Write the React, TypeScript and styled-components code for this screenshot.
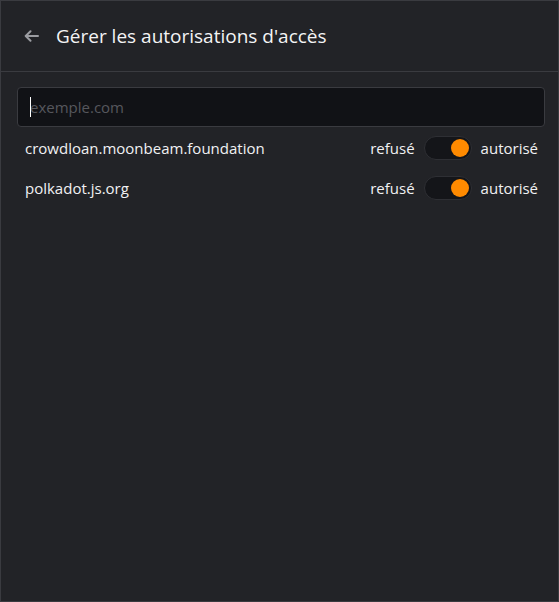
import React, { FC } from 'react';
import styled, { createGlobalStyle } from 'styled-components';

const GlobalStyle = createGlobalStyle`
  html, body {
    margin: 0;
    padding: 0;
    background: #222327;
  }
  body {
    font-family: 'Open Sans', 'Noto Sans', sans-serif;
    color: #ffffff;
  }
`;

const sites = ['crowdloan.moonbeam.foundation', 'polkadot.js.org'];

const SiteRow: FC<{ url: string }> = ({ url }) => (
  <Row>
    <Url>{url}</Url>
    <Controls>
      <Label>refusé</Label>
      <Toggle $on>
        <Knob />
      </Toggle>
      <Label>autorisé</Label>
    </Controls>
  </Row>
);

export default function App() {
  return (
    <>
      <GlobalStyle />
      <Frame>
        <Header>
          <BackButton aria-label="retour">
            <svg width="15" height="12" viewBox="0 0 15 12" fill="none">
              <path d="M14 6H2M6.5 1.2L1.7 6l4.8 4.8" stroke="#9b9ca1" strokeWidth="2" strokeLinecap="round" strokeLinejoin="round" />
            </svg>
          </BackButton>
          <Title>Gérer les autorisations d'accès</Title>
        </Header>
        <Body>
          <SearchBox>
            <Caret />
            <Search placeholder="exemple.com" />
          </SearchBox>
          <List>
            {sites.map(url => (
              <SiteRow key={url} url={url} />
            ))}
          </List>
        </Body>
      </Frame>
    </>
  );
}

const Frame = styled.div`
  box-sizing: border-box;
  width: 559px;
  height: 602px;
  border: 1px solid #3a3b40;
  background: #222327;
  display: flex;
  flex-direction: column;
`;

const Header = styled.div`
  height: 70px;
  display: flex;
  align-items: center;
  gap: 15px;
  padding: 0 0 0 23px;
  border-bottom: 1px solid #3a3b40;
  box-sizing: content-box;
`;

const BackButton = styled.button`
  background: none;
  border: 0;
  padding: 0;
  width: 17px;
  height: 14px;
  display: flex;
  align-items: center;
  cursor: pointer;
`;

const Title = styled.h1`
  margin: 0;
  font-size: 19px;
  font-weight: 500;
  color: #f4f4f5;
`;

const Body = styled.div`
  padding: 15px 13px 0 16px;
  display: flex;
  flex-direction: column;
`;

const SearchBox = styled.div`
  position: relative;
`;

const Caret = styled.span`
  position: absolute;
  left: 13px;
  top: 10px;
  width: 1px;
  height: 20px;
  background: #ffffff;
  pointer-events: none;
`;

const Search = styled.input`
  box-sizing: border-box;
  width: 100%;
  height: 40px;
  background: #111216;
  border: 1px solid #3a3b40;
  border-radius: 4px;
  padding: 0 12px;
  font-family: inherit;
  font-size: 15px;
  color: #ffffff;
  outline: none;

  &::placeholder {
    color: #56575d;
  }
`;

const List = styled.div`
  display: flex;
  flex-direction: column;
  padding: 1px 7px 0 8px;
`;

const Row = styled.div`
  height: 40px;
  display: flex;
  align-items: center;
  justify-content: space-between;
`;

const Url = styled.span`
  font-size: 15px;
  color: #f1f1f3;
`;

const Controls = styled.div`
  display: flex;
  align-items: center;
  gap: 9px;
`;

const Label = styled.span`
  font-size: 15px;
  color: #f1f1f3;
`;

const Toggle = styled.div<{ $on?: boolean }>`
  box-sizing: border-box;
  width: 48px;
  height: 24px;
  border-radius: 12px;
  background: #141519;
  border: 1px solid #2e2f34;
  display: flex;
  align-items: center;
  justify-content: ${p => (p.$on ? 'flex-end' : 'flex-start')};
  padding: 0 2px;
`;

const Knob = styled.span`
  width: 18px;
  height: 18px;
  border-radius: 50%;
  background: #ff8a00;
`;
